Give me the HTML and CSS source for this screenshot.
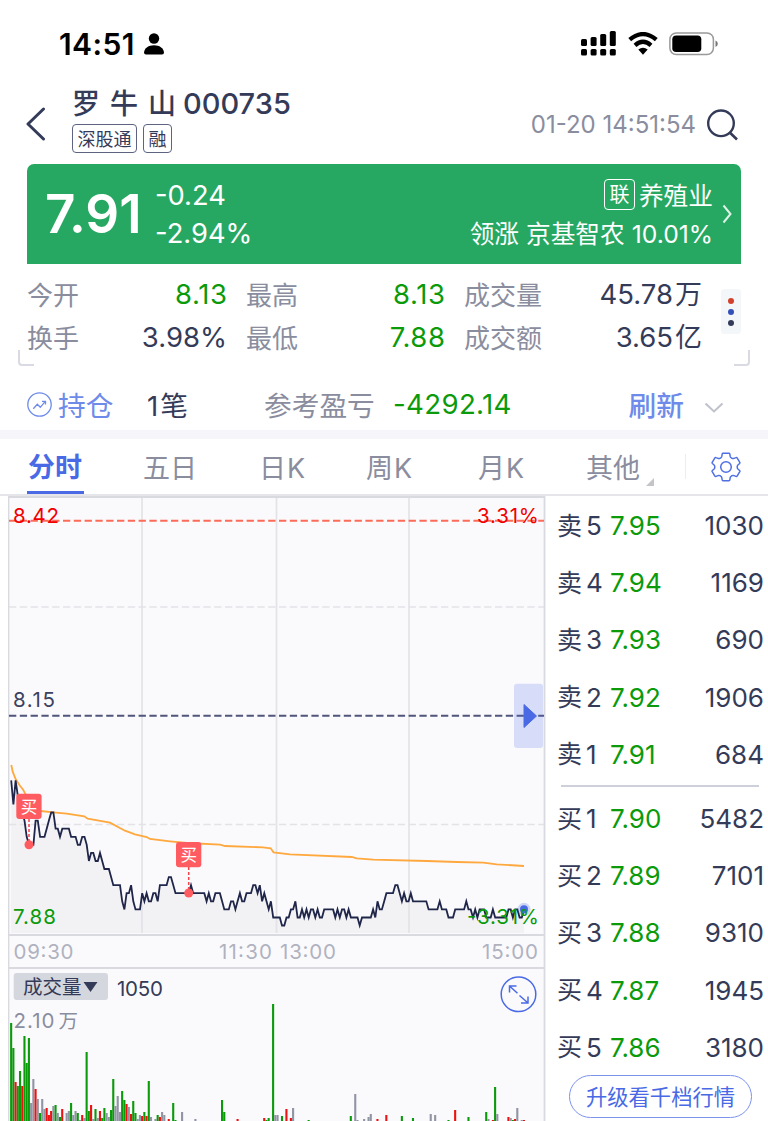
FILE: index.html
```
<!DOCTYPE html>
<html lang="zh-CN">

<head>
    <meta charset="UTF-8">
    <meta name="viewport" content="width=device-width, initial-scale=1.0">
    <title>罗牛山 000735</title>
    <link rel="stylesheet" href="styles.css">
</head>

<body>
    <div class="status-bar">
        <span class="status-bar__time">14:51</span>
        <svg class="status-bar__user" width="20" height="22" viewBox="0 0 20 22">
            <circle cx="10" cy="5.5" r="5.2" />
            <path d="M0 19.6C.4 15 4.6 12.3 10 12.3S19.6 15 20 19.6Q20 21.5 18 21.5H2Q0 21.5 0 19.6Z" />
        </svg>
        <div class="status-bar__icons">
            <svg width="36" height="26" viewBox="0 0 36 26">
                <rect x="0" y="8" width="6" height="7" rx="1.5" />
                <rect x="9.6" y="6" width="6" height="9" rx="1.5" />
                <rect x="19.2" y="3" width="6" height="12" rx="1.5" />
                <rect x="28.8" y="0" width="6" height="15" rx="1.5" />
                <rect x="0" y="18" width="6" height="6.5" rx="1.5" />
                <rect x="9.6" y="18" width="6" height="6.5" rx="1.5" />
                <rect x="19.2" y="18" width="6" height="6.5" rx="1.5" />
                <rect x="28.8" y="18" width="6" height="6.5" rx="1.5" />
            </svg>
            <svg class="wifi" width="30" height="24" viewBox="0 0 30 24">
                <path d="M1.7 7.7Q15 -3.5 28.3 7.7M7 13.3Q15 6.3 23 13.3" fill="none" stroke="#000"
                    stroke-width="4.3" />
                <path d="M10.3 17.6Q15 14 19.7 17.6L15 22.8Z" />
            </svg>
            <svg width="50" height="24" viewBox="0 0 50 24">
                <rect x=".9" y=".9" width="43.5" height="21.7" rx="6.5" fill="none" stroke="#999"
                    stroke-width="1.5" />
                <rect x="3.3" y="3.4" width="29" height="16.6" rx="3.8" />
                <path d="M46.5 8.5Q48.8 9.5 48.8 11.7T46.5 15Z" fill="#777" />
            </svg>
        </div>
    </div>

    <header class="header">
        <svg class="header__back" width="20" height="34" viewBox="0 0 20 34">
            <path d="M17.5 2L2 17L17.5 32" fill="none" stroke="#343b58" stroke-width="3" stroke-linecap="round"
                stroke-linejoin="round" />
        </svg>
        <div class="header__stock">
            <h1 class="header__name"><span class="header__cn">罗牛山</span>000735</h1>
            <div class="header__tags">
                <span class="tag">深股通</span>
                <span class="tag">融</span>
            </div>
        </div>
        <span class="header__date">01-20 14:51:54</span>
        <svg class="header__search" width="32" height="32" viewBox="0 0 32 32">
            <circle cx="14" cy="14.3" r="12.8" fill="none" stroke="#343b58" stroke-width="2.4" />
            <path d="M23.3 24L30 30.5" stroke="#343b58" stroke-width="2.6" />
        </svg>
    </header>

    <section class="banner">
        <span class="banner__price">7.91</span>
        <div class="banner__change">
            <span>-0.24</span>
            <span>-2.94%</span>
        </div>
        <div class="banner__sector">
            <div class="banner__line"><span class="banner__badge">联</span>养殖业</div>
            <div class="banner__line">领涨 京基智农 10.01%</div>
        </div>
        <svg class="banner__arrow" width="10" height="20" viewBox="0 0 10 20">
            <path d="M1.5 1.5L8.5 10L1.5 18.5" fill="none" stroke="#fff" stroke-opacity=".85" stroke-width="2" />
        </svg>
    </section>

    <section class="stats">
        <div class="stats__grid">
            <div class="stat"><span>今开</span><b class="green">8.13</b></div>
            <div class="stat"><span>最高</span><b class="green">8.13</b></div>
            <div class="stat"><span>成交量</span><b>45.78<i>万</i></b></div>
            <div class="stat"><span>换手</span><b>3.98%</b></div>
            <div class="stat"><span>最低</span><b class="green">7.88</b></div>
            <div class="stat"><span>成交额</span><b>3.65<i>亿</i></b></div>
        </div>
        <div class="stats__more">
            <span class="dot dot--red"></span>
            <span class="dot dot--blue"></span>
            <span class="dot"></span>
        </div>
        <span class="corner corner--left"></span>
        <span class="corner corner--right"></span>
    </section>

    <section class="position">
        <svg width="25" height="25" viewBox="0 0 25 25" fill="none" stroke="#6f8bea" stroke-width="1.3">
            <circle cx="12.5" cy="12.5" r="11.7" />
            <path d="M6.3 16.8L10.3 12.3L13.3 15.3L18.3 9.3M15 9.3H18.5V12.6" />
        </svg>
        <span class="position__hold">持仓</span>
        <span class="position__count">1笔</span>
        <span class="position__label">参考盈亏</span>
        <span class="position__profit">-4292.14</span>
        <span class="position__refresh">刷新</span>
        <svg class="position__arrow" width="20" height="12" viewBox="0 0 20 12">
            <path d="M1.5 1.5L10 9.5L18.5 1.5" fill="none" stroke="#bfc1cb" stroke-width="2" />
        </svg>
    </section>

    <nav class="tabs">
        <span class="tabs__item tabs__item--active">分时</span>
        <span class="tabs__item">五日</span>
        <span class="tabs__item">日<em>K</em></span>
        <span class="tabs__item">周<em>K</em></span>
        <span class="tabs__item">月<em>K</em></span>
        <span class="tabs__item tabs__item--more">其他</span>
        <div class="tabs__settings">
            <svg width="30" height="30" viewBox="0 0 30 30" fill="none" stroke="#4f6fe3" stroke-width="1.5"
                stroke-linejoin="round">
                <path
                    d="M12 1.2H18Q18.7 1.2 18.8 2L19.2 4.4Q19.5 5.5 20.3 5.9L21 6.3Q22 6.8 23 6.4L25 5.6Q25.7 5.3 26.1 5.9L28.8 10.4Q29.1 11 28.6 11.5L26.9 13Q26.2 13.700 26.2 15T26.9 17L28.6 18.5Q29.1 19 28.8 19.6L26.1 24.1Q25.7 24.7 25 24.4L23 23.6Q22 23.2 21 23.7L20.3 24.1Q19.5 24.5 19.2 25.6L18.8 28Q18.7 28.8 18 28.8H12Q11.3 28.8 11.2 28L10.8 25.6Q10.5 24.5 9.7 24.1L9 23.7Q8 23.2 7 23.6L5 24.4Q4.3 24.7 3.9 24.1L1.2 19.6Q.9 19 1.4 18.5L3.1 17Q3.8 16.3 3.8 15T3.1 13L1.4 11.5Q.9 11 1.2 10.4L3.9 5.9Q4.3 5.3 5 5.6L7 6.4Q8 6.8 9 6.3L9.7 5.9Q10.5 5.5 10.8 4.4L11.2 2Q11.3 1.2 12 1.2Z" />
                <circle cx="15" cy="15" r="5.3" />
            </svg>
        </div>
    </nav>

    <main class="main">
        <svg class="chart" width="538" height="625" viewBox="8 496 538 625">
            <rect x="8" y="496" width="537" height="625" fill="#fafafd" />
            <path class="chart__area" />
            <g class="chart__grid">
                <path d="M142 497V933M276.5 497V933M409 497V933" />
                <path d="M9 607H544M9 824.5H544" stroke-dasharray="7.3 3.5" />
            </g>
            <path class="chart__frame" d="M8.5 1121V497H544.5V1121M8.5 935H544.5M8.5 968H544.5" />
            <path d="M9 520.7H544" stroke="#fb6b57" stroke-width="2" stroke-dasharray="7.3 3.5" />
            <path d="M9 715.7H544" stroke="#50557a" stroke-width="2" stroke-dasharray="7.3 3.5" />
            <polyline class="chart__avg"
                points="11.3,765 12.7,771.7 15.7,779.3 20,785.7 23.3,790 25,793.3 33,807 40.7,811 53.3,812.3 66.7,813.7 84.3,816.3 87.7,818.7 110,822.7 125,830.7 135,834.3 146.7,837 150,839 170,841.3 187,843 220,844.7 225,846 263,847.3 270.7,848.3 273.5,852.3 290,854.3 351.7,857 356.7,858.3 373.3,859.7 426.7,861 456.7,862 483.3,862.7 496.7,864.3 524,866" />
            <polyline class="chart__price" />
            <circle cx="524" cy="909.3" r="6.5" fill="#4a6ae5" fill-opacity=".25" />
            <circle cx="524" cy="909.3" r="4" fill="#4a6ae5" />

            <g class="mark">
                <path d="M29 819V844M188.7 867V892" />
                <circle cx="29" cy="844.7" r="4.5" />
                <circle cx="188.7" cy="893" r="4.5" />
                <rect x="16.3" y="793.7" width="25.3" height="25.3" rx="3" />
                <rect x="176" y="842" width="25.3" height="25.3" rx="3" />
                <text x="29" y="812.5">买</text>
                <text x="188.7" y="860.8">买</text>
            </g>

            <rect x="514" y="683.7" width="29" height="64.3" rx="3" fill="#4a6ae5" fill-opacity=".2" />
            <path d="M524 704.5V727.5L536.5 716Z" fill="#4a6ae5" stroke="#4a6ae5" stroke-linejoin="round" />

            <g class="chart__label">
                <text x="13" y="523" fill="#f20000" textLength="46">8.42</text>
                <text x="477" y="523" fill="#f20000" textLength="62">3.31%</text>
                <text x="13" y="706.5" fill="#3b415e" textLength="42">8.15</text>
                <text x="13" y="924" fill="#0a9a0a" textLength="43">7.88</text>
                <text x="467" y="924" fill="#0a9a0a" textLength="72">-3.31%</text>
                <text x="13.5" y="958.5" fill="#b0b2bf" textLength="60">09:30</text>
                <text x="219" y="958.5" fill="#b0b2bf" textLength="53">11:30</text>
                <text x="280" y="958.5" fill="#b0b2bf" textLength="56">13:00</text>
                <text x="482" y="958.5" fill="#b0b2bf" textLength="56">15:00</text>
            </g>

            <g class="chart__bars"></g>
            <rect x="13.7" y="973" width="94.3" height="27" rx="3" fill="#d5d7de" />
            <path d="M83.5 982H97.5L90.5 992Z" fill="#343b58" />
            <g class="chart__label">
                <text class="chart__cn" x="23" y="994.3" fill="#343b58">成交量</text>
                <text x="117" y="996" fill="#343b58" textLength="46">1050</text>
                <text x="13.5" y="1028" fill="#8a8d9e" textLength="41">2.10</text>
                <text class="chart__cn" x="58.5" y="1027.5" fill="#8a8d9e">万</text>
            </g>
            <g fill="none" stroke="#4a6ae5" stroke-width="1.5">
                <circle cx="518.5" cy="994.3" r="17.3" />
                <path d="M517.5 993.3L509.5 986M509.5 992.5V986H516.5M519.5 995.5L528 1003M521 1003H528V996.5" />
            </g>
        </svg>

        <aside class="book">
            <div class="book__row"><span>卖</span><em>5</em><b>7.95</b><strong>1030</strong></div>
            <div class="book__row"><span>卖</span><em>4</em><b>7.94</b><strong>1169</strong></div>
            <div class="book__row"><span>卖</span><em>3</em><b>7.93</b><strong>690</strong></div>
            <div class="book__row"><span>卖</span><em>2</em><b>7.92</b><strong>1906</strong></div>
            <div class="book__row"><span>卖</span><em>1</em><b>7.91</b><strong>684</strong></div>
            <div class="book__line"></div>
            <div class="book__row"><span>买</span><em>1</em><b>7.90</b><strong>5482</strong></div>
            <div class="book__row"><span>买</span><em>2</em><b>7.89</b><strong>7101</strong></div>
            <div class="book__row"><span>买</span><em>3</em><b>7.88</b><strong>9310</strong></div>
            <div class="book__row"><span>买</span><em>4</em><b>7.87</b><strong>1945</strong></div>
            <div class="book__row"><span>买</span><em>5</em><b>7.86</b><strong>3180</strong></div>
            <button class="book__upgrade">升级看千档行情</button>
        </aside>
    </main>

    <script src="chart.js"></script>
</body>

</html>
```
FILE: chart.js
```
// price of each minute, in cents
const prices = [
    807, 804, 807, 805, 804, 803, 802, 800, 799, 799,
    799, 802, 802, 800, 800, 800, 801, 802, 803, 803,
    801, 801, 800, 801, 801, 801, 801, 800, 800, 800,
    799, 799, 800, 800, 799, 797, 798, 798, 797, 797,
    798, 797, 796, 796, 796, 795, 794, 794, 794, 794,
    792, 791, 793, 793, 794, 792, 791, 791, 791, 793,
    792, 793, 792, 792, 793, 793, 792, 794, 794, 794,
    794, 795, 795, 794, 793, 793, 793, 793, 793, 793,
    793, 794, 793, 793, 793, 793, 793, 793, 792, 793,
    792, 792, 793, 793, 793, 792, 791, 791, 791, 792,
    792, 791, 792, 793, 792, 792, 793, 793, 793, 794,
    794, 793, 794, 792, 793, 792, 791, 792, 790, 790,
    790, 790, 789, 789, 790, 790, 791, 791, 792, 790,
    790, 791, 790, 791, 790, 791, 791, 790, 791, 790,
    790, 791, 791, 791, 791, 791, 790, 791, 790, 791,
    791, 790, 791, 790, 790, 790, 790, 789, 790, 790,
    790, 790, 790, 791, 790, 792, 791, 791, 792, 793,
    793, 793, 793, 794, 794, 793, 792, 793, 792, 792,
    793, 792, 792, 792, 792, 792, 792, 792, 791, 791,
    791, 791, 791, 792, 791, 791, 791, 790, 790, 790,
    791, 791, 791, 791, 791, 792, 791, 791, 790, 791,
    790, 791, 791, 791, 790, 790, 790, 791, 790, 790,
    790, 790, 790, 790, 791, 791, 790, 791, 791, 790,
    790, 791
];

// minute, bar height, g = down / r = up / n = flat
const volumes = [
    [0, 98, 'g'], [1, 73, 'g'], [2, 39, 'r'], [3, 35, 'g'], [4, 50, 'g'], [5, 35, 'r'], [6, 85, 'g'],
    [7, 58, 'g'], [8, 83, 'g'], [9, 18, 'n'], [10, 42, 'n'], [11, 32, 'r'], [12, 22, 'n'], [13, 8, 'g'],
    [14, 22, 'n'], [15, 12, 'n'], [16, 13, 'r'], [17, 6, 'r'], [18, 10, 'r'], [19, 15, 'n'], [20, 16, 'g'],
    [21, 8, 'n'], [22, 4, 'g'], [23, 12, 'r'], [25, 8, 'n'], [26, 10, 'n'], [27, 18, 'g'], [28, 6, 'n'],
    [29, 10, 'n'], [30, 8, 'g'], [31, 1, 'n'], [32, 6, 'r'], [33, 3, 'n'], [34, 69, 'g'], [35, 10, 'g'],
    [36, 16, 'r'], [37, 2, 'n'], [38, 12, 'g'], [39, 3, 'n'], [40, 10, 'r'], [41, 3, 'g'], [42, 13, 'g'],
    [43, 8, 'n'], [44, 4, 'n'], [45, 11, 'g'], [46, 42, 'g'], [47, 15, 'n'], [48, 25, 'n'], [49, 9, 'n'],
    [50, 30, 'g'], [51, 21, 'g'], [52, 17, 'r'], [53, 14, 'n'], [54, 7, 'r'], [55, 20, 'g'], [56, 8, 'g'],
    [57, 2, 'n'], [58, 6, 'n'], [59, 5, 'r'], [60, 9, 'g'], [61, 5, 'r'], [62, 40, 'g'], [63, 4, 'n'],
    [65, 2, 'n'], [66, 6, 'g'], [67, 4, 'r'], [68, 9, 'n'], [69, 6, 'n'], [71, 2, 'r'], [73, 18, 'g'],
    [74, 1, 'g'], [77, 9, 'n'], [83, 2, 'n'], [95, 21, 'g'], [96, 9, 'g'], [102, 2, 'r'], [114, 3, 'r'],
    [115, 1, 'g'], [116, 3, 'g'], [118, 117, 'g'], [119, 6, 'n'], [120, 6, 'n'], [122, 5, 'g'],
    [124, 12, 'r'], [126, 3, 'r'], [127, 13, 'n'], [134, 1, 'g'], [153, 5, 'g'], [155, 27, 'n'],
    [156, 1, 'n'], [159, 2, 'n'], [161, 4, 'n'], [162, 7, 'n'], [165, 2, 'r'], [169, 6, 'r'],
    [176, 5, 'g'], [181, 3, 'g'], [189, 7, 'n'], [191, 6, 'n'], [197, 1, 'g'], [200, 11, 'r'],
    [206, 4, 'g'], [214, 9, 'g'], [215, 2, 'n'], [217, 1, 'r'], [218, 34, 'g'], [219, 7, 'n'],
    [224, 4, 'r'], [225, 3, 'n'], [226, 1, 'g'], [227, 2, 'r'], [228, 13, 'n'], [230, 1, 'n'], [231, 1, 'r']
];

const colors = { g: '#0a9a0a', r: '#ee1111', n: '#9094a3' };
const minuteX = minute => 11.2 + minute * 2.22;

// price line and the shaded area under it
const points = prices.map((price, i) => `${minuteX(i).toFixed(1)},${(715.7 + (815 - price) * 8.07).toFixed(1)}`);
document.querySelector('.chart__price').setAttribute('points', points.join(' '));
document.querySelector('.chart__area').setAttribute('d', `M11,933L${points.join('L')}L524,933Z`);

// volume bars
const bars = document.querySelector('.chart__bars');
volumes.forEach(([minute, height, type]) => {
    const bar = document.createElementNS('http://www.w3.org/2000/svg', 'rect');
    bar.setAttribute('x', minuteX(minute) - 1.1);
    bar.setAttribute('y', 1121 - height);
    bar.setAttribute('width', 2.1);
    bar.setAttribute('height', height);
    bar.setAttribute('fill', colors[type]);
    bars.appendChild(bar);
});
```
FILE: styles.css
```
* {
    box-sizing: border-box;
}

body {
    margin: 0;
    width: 768px;
    height: 1121px;
    overflow: hidden;
    background-color: #fff;
    color: #343b58;
    font-family: Inter, "Noto Sans CJK SC", sans-serif;
    white-space: nowrap;
}

.status-bar {
    display: flex;
    align-items: center;
    height: 88px;
    padding: 0 49px 0 59px;
    color: #000;
}

.status-bar__time {
    width: 85px;
    font-size: 30px;
    font-weight: 600;
    letter-spacing: 0.4px;
}

.status-bar__icons {
    display: flex;
    align-items: center;
    gap: 11px;
    margin-left: auto;
}

.header {
    display: flex;
    align-items: center;
    height: 76px;
    padding: 0 29px 0 26px;
}

.header__back {
    margin-top: -4px;
}

.header__stock {
    align-self: flex-start;
    margin: -3px 0 0 26px;
}

.header__name {
    display: flex;
    align-items: center;
    height: 36px;
    margin: 0;
    font-size: 29px;
    font-weight: 500;
}

.header__cn {
    margin: -2px -3px 0 0;
    font-size: 28px;
    letter-spacing: 10px;
}

.header__tags {
    display: flex;
    gap: 6px;
    margin-top: 3px;
}

.tag {
    height: 29px;
    padding: 0 4.5px;
    border: 1.5px solid #5d6380;
    border-radius: 4px;
    font-size: 18px;
    line-height: 29px;
}

.header__date {
    margin: -4px 0 0 auto;
    color: #8a8d9e;
    font-size: 24px;
}

.header__search {
    margin: -2px 0 0 11px;
}

.banner {
    display: flex;
    align-items: center;
    width: 714px;
    height: 100px;
    margin-left: 27px;
    padding: 0 9px 0 18px;
    border-radius: 7px 7px 0 0;
    background-color: #27a862;
    color: #fff;
}

.banner__price {
    width: 110px;
    font-size: 53px;
    font-weight: 600;
}

.banner__change {
    display: flex;
    flex-direction: column;
    padding-top: 2px;
    font-size: 27.3px;
    line-height: 38px;
}

.banner__sector {
    margin-left: auto;
    font-size: 24.7px;
}

.banner__line {
    display: flex;
    align-items: center;
    justify-content: flex-end;
    height: 38px;
    padding-bottom: 3px;
    white-space: pre;
}

.banner__badge {
    width: 31px;
    height: 31px;
    margin: 1px 4px 0 0;
    border: 1.5px solid #fff;
    border-radius: 4px;
    font-size: 20px;
    line-height: 31px;
    text-align: center;
}

.banner__arrow {
    margin-left: 9px;
}

.stats {
    position: relative;
    display: flex;
    height: 102px;
    padding: 9px 27px 0;
}

.stats__grid {
    display: grid;
    grid-template-columns: 200px 199px 238px;
    grid-auto-rows: 43px;
    column-gap: 19px;
}

.stat {
    display: flex;
    align-items: center;
    justify-content: space-between;
    color: #8a8d9e;
    font-size: 26px;
}

.stat span {
    margin-top: -3px;
}

.stat b {
    color: #343b58;
    font-size: 27.5px;
    font-weight: 400;
    line-height: 43px;
}

.stat i {
    margin-left: 2px;
    font-size: 27px;
    font-style: normal;
}

.stat .green {
    color: #0a9a0a;
    letter-spacing: 0.6px;
    margin-right: -0.6px;
}

.stats__more {
    display: flex;
    flex-direction: column;
    align-items: center;
    justify-content: center;
    gap: 5px;
    width: 20px;
    height: 45px;
    margin: 16px 0 0 auto;
    border-radius: 3px;
    background-color: #f4f7f9;
}

.dot {
    width: 6px;
    height: 6px;
    border-radius: 50%;
    background-color: #343b58;
}

.dot--red {
    background-color: #d4402b;
}

.dot--blue {
    background-color: #3450b8;
}

.corner {
    position: absolute;
    bottom: 0;
    width: 16px;
    height: 16px;
    border-bottom: 2px solid #d9dae3;
}

.corner--left {
    left: 18px;
    border-left: 2px solid #d9dae3;
    border-bottom-left-radius: 4px;
}

.corner--right {
    right: 18px;
    border-right: 2px solid #d9dae3;
    border-bottom-right-radius: 4px;
}

.position {
    display: flex;
    align-items: center;
    height: 73px;
    padding: 12px 45px 0 27px;
    border-bottom: 9px solid #f6f6fa;
    font-size: 27.7px;
}

.position__hold,
.position__label,
.position__count,
.position__refresh {
    margin-top: -1px;
}

.position__hold {
    width: 89px;
    margin-left: 6px;
    color: #6f8bea;
}

.position__count {
    width: 117px;
    letter-spacing: 2px;
}

.position__label {
    width: 129px;
    color: #8a8d9e;
}

.position__profit {
    color: #0a9a0a;
    letter-spacing: 0.3px;
}

.position__refresh {
    margin-left: auto;
    color: #6f8bea;
    font-weight: 500;
}

.position__arrow {
    margin: 8px -1px 0 20px;
}

.tabs {
    display: grid;
    grid-template-columns: 116px 116px 107px 112px 108px 99px 1fr;
    align-items: center;
    height: 57px;
    padding: 0 27px;
    border-bottom: 2px solid #e6e6ea;
    color: #8a8d9e;
    font-size: 27px;
}

.tabs__item em {
    margin-left: 1px;
    font-style: normal;
}

.tabs__item--active {
    width: 57px;
    height: 55px;
    padding-left: 1px;
    border-bottom: 3px solid #4a6ae5;
    color: #4a6ae5;
    font-weight: 700;
    line-height: 58px;
}

.tabs__item--more {
    position: relative;
}

.tabs__item--more::before {
    content: "";
    position: absolute;
    left: 60px;
    bottom: 0;
    border: 4.5px solid #c4c4c8;
    border-top-color: transparent;
    border-left-color: transparent;
}

.tabs__settings {
    display: flex;
    align-items: center;
    justify-content: flex-end;
    height: 25px;
    border-left: 1px solid #ededf0;
}

.main {
    display: flex;
    padding-left: 8px;
}

.chart {
    flex: none;
}

.chart__area {
    fill: #f2f2f4;
}

.chart__grid path {
    fill: none;
    stroke: #e3e3e7;
    stroke-width: 1.7;
}

.chart__frame {
    fill: none;
    stroke: #d9dae0;
    stroke-width: 1.8;
}

.chart__avg {
    fill: none;
    stroke: #ffa83e;
    stroke-width: 1.8;
}

.chart__price {
    fill: none;
    stroke: #1f264a;
    stroke-width: 1.8;
}

.chart__label {
    font-size: 20.5px;
}

.chart__cn {
    font-size: 19.5px;
}

.mark {
    fill: #ff5c62;
}

.mark path {
    stroke: #f4434a;
    stroke-width: 1.5;
    stroke-dasharray: 3 2;
}

.mark text {
    fill: #fff;
    font-size: 16.5px;
    text-anchor: middle;
}

.book {
    flex: 1;
    padding: 1px 4px 0 11px;
    font-size: 26px;
}

.book__row {
    display: grid;
    grid-template-columns: 29px 24px 1fr auto;
    align-items: center;
    height: 57.2px;
}

.book__row span {
    margin-top: -4px;
    font-size: 25px;
}

.book__row em {
    font-style: normal;
}

.book__row b {
    color: #0a9a0a;
    font-weight: 400;
}

.book__row strong {
    font-weight: 400;
}

.book__line {
    height: 2px;
    margin: 2px 5px 3px 4px;
    background-color: #cdd0da;
}

.book__upgrade {
    display: block;
    width: 183px;
    height: 43px;
    margin: -1px 0 0 12px;
    padding: 0 0 2px;
    border: 1.5px solid #7c93ec;
    border-radius: 22px;
    background-color: #fff;
    color: #4a6ae5;
    font-family: inherit;
    font-size: 21.3px;
}
```
